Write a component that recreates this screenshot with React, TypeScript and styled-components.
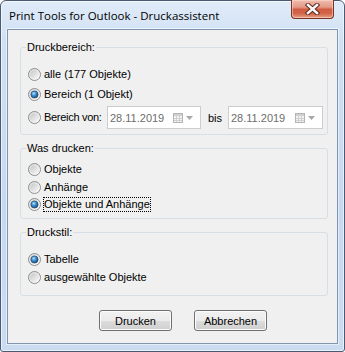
import React, { useId } from "react";
import styled, { createGlobalStyle } from "styled-components";

const GlobalStyle = createGlobalStyle`
  html, body {
    margin: 0;
    padding: 0;
    background: #fff;
  }
  body {
    font-family: "Liberation Sans", Arial, sans-serif;
  }
`;

const Window = styled.div`
  box-sizing: border-box;
  width: 345px;
  height: 352px;
  display: flex;
  flex-direction: column;
  padding: 0 6px 7px;
  border: 1px solid #4a5a73;
  border-radius: 6px 6px 3px 3px;
  background: linear-gradient(180deg, #e0ebf8 0%, #cfe0f4 12%, #c5d9f1 60%, #cadcf2 100%);
  box-shadow: inset 0 0 0 1px rgba(255, 255, 255, 0.6);
`;

const TitleBar = styled.div`
  height: 28px;
  display: flex;
  align-items: flex-start;
`;

const Title = styled.div`
  padding: 7px 0 0 2px;
  font-family: "Open Sans", "Noto Sans", sans-serif;
  font-size: 11.5px;
  line-height: 16px;
  color: #000;
  white-space: nowrap;
`;

const CloseButton = styled.div`
  box-sizing: border-box;
  width: 43px;
  height: 19px;
  margin: -1px 4px 0 auto;
  display: flex;
  align-items: center;
  justify-content: center;
  border: 1px solid #7a3426;
  border-top: none;
  border-radius: 0 0 4px 4px;
  background: linear-gradient(180deg, #f0bcae 0%, #e39a86 40%, #d05b42 52%, #d2654a 75%, #e6a083 100%);
  box-shadow: inset 0 0 0 1px rgba(255, 225, 215, 0.5);
`;

const Client = styled.div`
  flex: 1;
  display: flex;
  flex-direction: column;
  padding: 11px 9px 0 12px;
  border: 1px solid #8395ae;
  background: #f0f0f0;
  box-shadow: 0 0 0 1px rgba(255, 255, 255, 0.5);
`;

const Group = styled.fieldset<{ $top: number; $bottom: number; $space?: number }>`
  margin: ${(p) => p.$space ?? 0}px 0 0;
  padding: ${(p) => p.$top}px 0 ${(p) => p.$bottom}px 7px;
  border: 1px solid #d5dfe5;
  border-radius: 3px;
  min-width: 0;
`;

const Legend = styled.legend`
  margin-left: -2px;
  padding: 0 1px;
  font-size: 11px;
  line-height: 13px;
  color: #000;
`;

const Rows = styled.div<{ $gap: number }>`
  display: flex;
  flex-direction: column;
  gap: ${(p) => p.$gap}px;
`;

const Row = styled.div<{ $h?: number }>`
  height: ${(p) => p.$h ?? 17}px;
  display: flex;
  align-items: center;
`;

const Label = styled.span<{ $focus?: boolean; $w?: number }>`
  box-sizing: border-box;
  flex: none;
  margin-left: 2px;
  ${(p) => (p.$w ? `width: ${p.$w}px; letter-spacing: -0.3px;` : "")}
  border: 1px ${(p) => (p.$focus ? "dotted #000" : "solid transparent")};
  font-size: 11px;
  line-height: 13px;
  color: #000;
  white-space: nowrap;
`;

const Bis = styled.span`
  box-sizing: border-box;
  flex: none;
  width: 27px;
  padding-left: 7px;
  font-size: 11px;
  color: #000;
`;

const DateBox = styled.div<{ $w: number }>`
  box-sizing: border-box;
  flex: none;
  width: ${(p) => p.$w}px;
  height: 23px;
  display: flex;
  align-items: center;
  padding: 0 7px 0 2px;
  border: 1px solid #cdcdcd;
  background: #fff;
  color: #6d6d6d;
  font-size: 11px;
`;

const DateIcons = styled.div`
  margin-left: auto;
  display: flex;
  align-items: center;
  gap: 3px;
`;

const ButtonRow = styled.div`
  display: flex;
  gap: 22px;
  margin-top: 14px;
  padding-left: 79px;
`;

const Button = styled.div`
  box-sizing: border-box;
  width: 73px;
  height: 21px;
  display: flex;
  align-items: center;
  justify-content: center;
  border: 1px solid #707070;
  border-radius: 3px;
  background: linear-gradient(180deg, #f2f2f2 0%, #ebebeb 50%, #dddddd 50%, #cfcfcf 100%);
  box-shadow: inset 0 0 0 1px #fcfcfc;
  font-size: 11px;
  color: #000;
`;

function Radio({ checked }: { checked?: boolean }) {
  const id = useId().replace(/:/g, "");
  return (
    <svg width="13" height="13" viewBox="0 0 13 13" style={{ flex: "none" }}>
      <defs>
        <linearGradient id={`o${id}`} x1="0" y1="0" x2="1" y2="1">
          <stop offset="0" stopColor="#d9d9d9" />
          <stop offset="1" stopColor="#ffffff" />
        </linearGradient>
        <linearGradient id={`i${id}`} x1="0" y1="0" x2="1" y2="1">
          <stop offset="0" stopColor="#c6c6c6" />
          <stop offset="1" stopColor="#f8f8f8" />
        </linearGradient>
        <radialGradient id={`c${id}`} cx="0.4" cy="0.35" r="0.65">
          <stop offset="0" stopColor="#b8e6fc" />
          <stop offset="0.45" stopColor="#3d93d6" />
          <stop offset="1" stopColor="#174d80" />
        </radialGradient>
      </defs>
      <circle cx="6.5" cy="6.5" r="6" fill={`url(#o${id})`} stroke="#8d8d8d" />
      <circle cx="6.5" cy="6.5" r="4.3" fill={`url(#i${id})`} />
      {checked && <circle cx="6.5" cy="6.5" r="3.6" fill={`url(#c${id})`} stroke="#1e3b5e" strokeWidth="0.6" />}
    </svg>
  );
}

function DateField({ w }: { w: number }) {
  return (
    <DateBox $w={w}>
      28.11.2019
      <DateIcons>
        <svg width="10" height="10" viewBox="0 0 10 10">
          <rect x="0.5" y="0.5" width="9" height="9" fill="#f3f3f3" stroke="#b4b4b4" />
          <rect x="1" y="1" width="8" height="2" fill="#d0d0d0" />
          <path d="M1 5.5h8M1 7.5h8M3.5 3v6M6.5 3v6" stroke="#d0d0d0" strokeWidth="1" />
        </svg>
        <svg width="7" height="4" viewBox="0 0 7 4">
          <polygon points="0,0 7,0 3.5,4" fill="#a8a8a8" />
        </svg>
      </DateIcons>
    </DateBox>
  );
}

export default function App() {
  return (
    <>
      <GlobalStyle />
      <Window>
        <TitleBar>
          <Title>Print Tools for Outlook - Druckassistent</Title>
          <CloseButton>
            <svg width="15" height="12" viewBox="0 0 15 12">
              <path d="M3 2l9 8M12 2l-9 8" stroke="#5a2218" strokeWidth="4.4" strokeLinecap="square" />
              <path d="M3 2l9 8M12 2l-9 8" stroke="#f6f6f6" strokeWidth="2.6" strokeLinecap="square" />
            </svg>
          </CloseButton>
        </TitleBar>
        <Client>
          <Group $top={12} $bottom={5}>
            <Legend>Druckbereich:</Legend>
            <Rows $gap={3}>
              <Row>
                <Radio />
                <Label>alle (177 Objekte)</Label>
              </Row>
              <Row>
                <Radio checked />
                <Label>Bereich (1 Objekt)</Label>
              </Row>
              <Row $h={23}>
                <Radio />
                <Label $w={64}>Bereich von:</Label>
                <DateField w={94} />
                <Bis>bis</Bis>
                <DateField w={95} />
              </Row>
            </Rows>
          </Group>
          <Group $top={6} $bottom={5} $space={7}>
            <Legend>Was drucken:</Legend>
            <Rows $gap={0.5}>
              <Row>
                <Radio />
                <Label>Objekte</Label>
              </Row>
              <Row>
                <Radio />
                <Label>Anhänge</Label>
              </Row>
              <Row>
                <Radio checked />
                <Label $focus>Objekte und Anhänge</Label>
              </Row>
            </Rows>
          </Group>
          <Group $top={12} $bottom={9} $space={7}>
            <Legend>Druckstil:</Legend>
            <Rows $gap={1}>
              <Row>
                <Radio checked />
                <Label>Tabelle</Label>
              </Row>
              <Row>
                <Radio />
                <Label>ausgewählte Objekte</Label>
              </Row>
            </Rows>
          </Group>
          <ButtonRow>
            <Button>Drucken</Button>
            <Button>Abbrechen</Button>
          </ButtonRow>
        </Client>
      </Window>
    </>
  );
}
